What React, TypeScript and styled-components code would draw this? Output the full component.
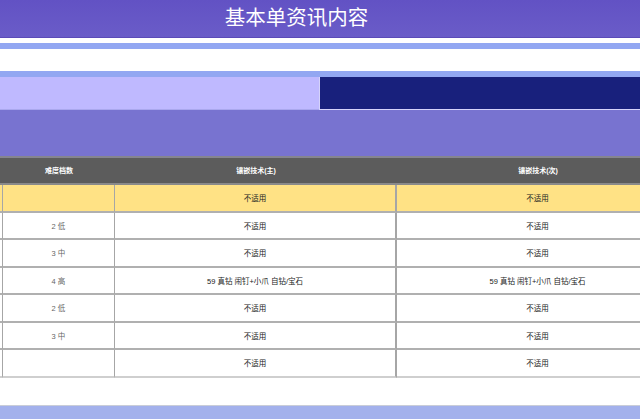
import React from "react";
import styled, { createGlobalStyle } from "styled-components";

const GlobalStyle = createGlobalStyle`
  html, body {
    margin: 0;
    padding: 0;
    background: #fff;
    overflow: hidden;
  }
`;

const Page = styled.div`
  width: 640px;
  height: 419px;
  overflow: hidden;
  font-family: "Liberation Sans", "Noto Sans CJK SC", sans-serif;
`;

const TitleBar = styled.h1`
  margin: 0;
  height: 37px;
  border-bottom: 1px solid #5b4bb8;
  background: linear-gradient(#6252c4, #6a5cc8);
  color: #fff;
  font-size: 20.5px;
  font-weight: 400;
  line-height: 35px;
  text-align: center;
  padding-right: 47px;
`;

const Stripe = styled.div`
  height: 6px;
  margin-top: 5px;
  background: #92a7f2;
`;

const Spacer = styled.div<{ $height: number }>`
  height: ${(p) => p.$height}px;
`;

const Tabs = styled.div`
  display: grid;
  grid-template-columns: 319px 321px;
  height: 33px;
  border-top: 6px solid #92a7f2;
`;

const TabLeft = styled.div`
  background: #bfb9ff;
  border-bottom: 1px solid #aaa8ee;
`;

const TabRight = styled.div`
  background: #18207c;
  border-left: 1px solid #d5d3fa;
  border-bottom: 1px solid #d5d3fa;
`;

const Band = styled.div`
  height: 46px;
  background: #7873d0;
  border-bottom: 2px solid #85858f;
`;

// the last column runs past the right edge of the page, as in the screenshot
const Table = styled.div`
  display: grid;
  width: 679px;
  grid-template-columns: 3px 112px 282px 282px;
`;

const Row = styled.div<{ $kind?: "head" | "hilite" }>`
  display: contents;
  color: ${(p) => (p.$kind === "head" ? "#fff" : "#222")};
`;

const Cell = styled.div<{
  $kind?: "head" | "hilite";
  $muted?: boolean;
  $end?: boolean;
  $rule?: number;
}>`
  box-sizing: border-box;
  height: ${(p) => (p.$kind === "head" ? 27 : 27.5)}px;
  display: flex;
  align-items: center;
  justify-content: center;
  font-size: ${(p) => (p.$kind === "head" ? 7 : 7.5)}px;
  font-weight: ${(p) => (p.$kind === "head" ? 700 : 400)};
  padding-bottom: ${(p) => (p.$kind === "head" ? 2 : 0)}px;
  white-space: nowrap;
  color: ${(p) => (p.$muted ? "#666" : "inherit")};
  background: ${(p) =>
    p.$kind === "head" ? "#5c5c5c" : p.$kind === "hilite" ? "#ffe285" : "#fff"};
  border-bottom: 2px solid
    ${(p) => (p.$kind === "head" ? "#8a8a8a" : p.$end ? "#cfcfcf" : "#b0b0b0")};
  border-right: ${(p) => (p.$kind === "head" ? 0 : p.$rule ?? 1)}px solid #a6a6a6;
`;

const Footer = styled.div`
  margin-top: 27.5px;
  height: 14px;
  background: #a3b1ec;
  border-top: 1px solid #c9cdd8;
`;

type RowData = { level: string; main: string; sub: string; kind?: "hilite" };

const NA = "不适用";
const GEM = "59 真钻 闹钉+小爪 自钻/宝石";

const rows: RowData[] = [
  { level: "", main: NA, sub: NA, kind: "hilite" },
  { level: "2 低", main: NA, sub: NA },
  { level: "3 中", main: NA, sub: NA },
  { level: "4 高", main: GEM, sub: GEM },
  { level: "2 低", main: NA, sub: NA },
  { level: "3 中", main: NA, sub: NA },
  { level: "", main: NA, sub: NA },
];

export default function App() {
  return (
    <Page>
      <GlobalStyle />
      <TitleBar>基本单资讯内容</TitleBar>
      <Stripe />
      <Spacer $height={22} />
      <Tabs>
        <TabLeft />
        <TabRight />
      </Tabs>
      <Band />
      <Table>
        <Row $kind="head">
          <Cell $kind="head" />
          <Cell $kind="head">难度档数</Cell>
          <Cell $kind="head">镶嵌技术(主)</Cell>
          <Cell $kind="head">镶嵌技术(次)</Cell>
        </Row>
        {rows.map((row, i) => {
          const end = i === rows.length - 1;
          return (
            <Row key={i} $kind={row.kind}>
              <Cell $kind={row.kind} $end={end} />
              <Cell $kind={row.kind} $end={end} $muted>
                {row.level}
              </Cell>
              <Cell $kind={row.kind} $end={end} $rule={2}>
                {row.main}
              </Cell>
              <Cell $kind={row.kind} $end={end}>
                {row.sub}
              </Cell>
            </Row>
          );
        })}
      </Table>
      <Footer />
    </Page>
  );
}
